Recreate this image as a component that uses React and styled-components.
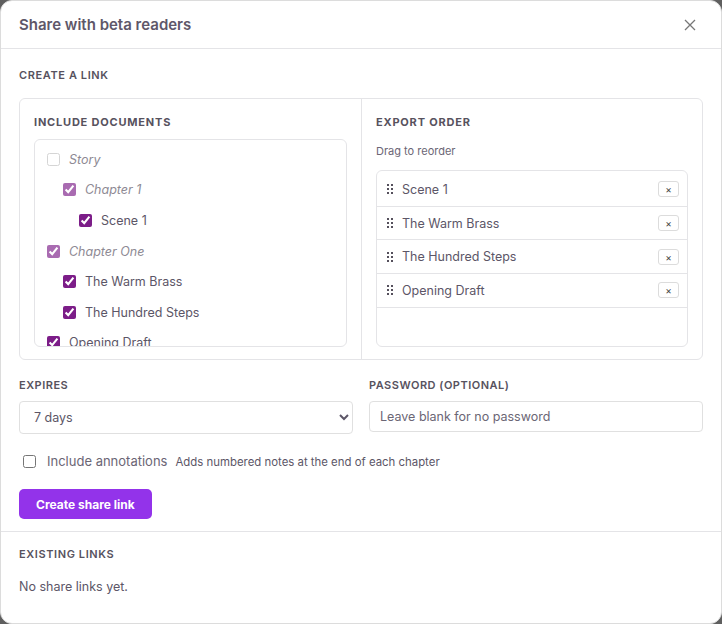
import styled, { createGlobalStyle } from "styled-components";

const Global = createGlobalStyle`
  html, body { margin: 0; padding: 0; background: #5f5f5f; }
  body { font-family: Inter, "Noto Sans", sans-serif; }
  * { box-sizing: border-box; }
`;

const Modal = styled.div`
  width: 722px;
  height: 624px;
  background: #fff;
  border: 1px solid #dcdcdc;
  border-radius: 12px;
  overflow: hidden;
  display: flex;
  flex-direction: column;
  color: #5c5667;
`;

const Header = styled.div`
  height: 48px;
  flex: none;
  padding: 0 24px 0 18px;
  display: flex;
  align-items: center;
  justify-content: space-between;
  border-bottom: 1px solid #e4e4e7;
`;

const Title = styled.h2`
  margin: 0;
  font-size: 15px;
  font-weight: 600;
  color: #5e5769;
`;

const CloseButton = styled.button`
  border: none;
  background: none;
  padding: 0;
  width: 14px;
  height: 14px;
  display: flex;
  align-items: center;
  justify-content: center;
`;

const Section = styled.div`
  padding: ${(p) => p.pad || "18px 18px 12px"};
  border-bottom: ${(p) => (p.divider ? "1px solid #e4e4e7" : "none")};
  display: flex;
  flex-direction: column;
`;

const SectionTitle = styled.div`
  font-size: 11px;
  font-weight: 600;
  letter-spacing: 0.6px;
  text-transform: uppercase;
  color: #57525e;
  margin-bottom: ${(p) => p.mb || "16px"};
`;

const Panel = styled.div`
  display: grid;
  grid-template-columns: 342px 1fr;
  border: 1px solid #e4e4e7;
  border-radius: 6px;
  height: 262px;
`;

const Column = styled.div`
  padding: 16px 14px 12px 14px;
  border-right: ${(p) => (p.divider ? "1px solid #e4e4e7" : "none")};
  display: flex;
  flex-direction: column;
`;

const ColTitle = styled.div`
  font-size: 11px;
  font-weight: 700;
  letter-spacing: 0.8px;
  color: #57525e;
  margin-bottom: ${(p) => p.mb || "10px"};
`;

const Hint = styled.div`
  font-size: 11px;
  color: #6b6675;
  margin-bottom: 12px;
`;

const Tree = styled.div`
  border: 1px solid #e4e4e7;
  border-radius: 6px;
  height: 208px;
  overflow: hidden;
  padding: 4px 12px;
`;

const TreeRow = styled.label`
  display: flex;
  align-items: center;
  gap: 9px;
  height: 30.6px;
  padding-left: ${(p) => p.level * 16}px;
  font-size: 12.5px;
  color: ${(p) => (p.folder ? "#8e8a94" : "#5c5667")};
  font-style: ${(p) => (p.folder ? "italic" : "normal")};
`;

const Check = styled.input.attrs({ type: "checkbox" })`
  margin: 0;
  width: 13px;
  height: 13px;
  accent-color: #7c1d88;
  opacity: ${(p) => (p.faded ? (p.defaultChecked ? 0.65 : 0.3) : 1)};
`;

const OrderList = styled.div`
  border: 1px solid #e4e4e7;
  border-radius: 6px;
  flex: 1;
  overflow: hidden;
  padding-top: 2px;
`;

const OrderRow = styled.div`
  display: flex;
  align-items: center;
  height: 33.7px;
  padding: 0 8px 0 10px;
  border-bottom: 1px solid #e4e4e7;
  font-size: 12.5px;
  color: #5c5667;
`;

const Grip = styled.svg`
  flex: none;
  margin-right: 9px;
`;

const OrderName = styled.span`
  flex: 1;
`;

const RemoveButton = styled.button`
  width: 21px;
  height: 16px;
  border: 1px solid #dcdcdc;
  border-radius: 3px;
  background: #fff;
  padding: 0;
  font-size: 10px;
  line-height: 1;
  color: #444;
  display: flex;
  align-items: center;
  justify-content: center;
  font-family: Inter, sans-serif;
`;

const FieldGrid = styled.div`
  display: grid;
  grid-template-columns: 1fr 1fr;
  gap: 16px;
  margin-top: 18px;
`;

const Field = styled.div`
  display: flex;
  flex-direction: column;
`;

const FieldLabel = styled.label`
  font-size: 11px;
  font-weight: 600;
  letter-spacing: 0.5px;
  color: #57525e;
  margin-bottom: 9px;
`;

const Select = styled.select`
  height: 33px;
  border: 1px solid #e0e0e0;
  border-radius: 4px;
  padding: 0 8px 0 10px;
  font-family: Inter, sans-serif;
  font-size: 12.5px;
  color: #5c5667;
  background: #fff;
`;

const TextInput = styled.input`
  height: 31px;
  border: 1px solid #e0e0e0;
  border-radius: 4px;
  padding: 0 10px;
  font-family: Inter, sans-serif;
  font-size: 12.5px;
  color: #5c5667;
  &::placeholder { color: #6b6675; }
`;

const OptionRow = styled.label`
  display: flex;
  align-items: baseline;
  gap: 8px;
  margin: 19px 0 0 4px;
`;

const PlainCheck = styled.input.attrs({ type: "checkbox" })`
  margin: 0 3px 0 0;
  width: 13px;
  height: 13px;
  align-self: center;
`;

const OptionText = styled.span`
  font-size: 13px;
  color: #6b6675;
`;

const OptionHint = styled.span`
  font-size: 11.4px;
  color: #5c5667;
`;

const PrimaryButton = styled.button`
  align-self: flex-start;
  margin-top: 20px;
  height: 30px;
  padding: 0 17px;
  border: none;
  border-radius: 5px;
  background: #9333ea;
  color: #fff;
  font-family: Inter, sans-serif;
  font-size: 12px;
  font-weight: 700;
`;

const Empty = styled.div`
  font-size: 12.5px;
  color: #5c5667;
`;

const tree = [
  { name: "Story", level: 0, folder: true, checked: false },
  { name: "Chapter 1", level: 1, folder: true, checked: true },
  { name: "Scene 1", level: 2, checked: true },
  { name: "Chapter One", level: 0, folder: true, checked: true },
  { name: "The Warm Brass", level: 1, checked: true },
  { name: "The Hundred Steps", level: 1, checked: true },
  { name: "Opening Draft", level: 0, checked: true },
];

const order = ["Scene 1", "The Warm Brass", "The Hundred Steps", "Opening Draft"];

const GripIcon = () => (
  <Grip width="6" height="10" viewBox="0 0 6 10">
    {[0, 4, 8].map((y) => (
      <g key={y} fill="#55505c">
        <rect x="0" y={y} width="2" height="2" />
        <rect x="4" y={y} width="2" height="2" />
      </g>
    ))}
  </Grip>
);

export default function App() {
  return (
    <>
      <Global />
      <Modal>
        <Header>
          <Title>Share with beta readers</Title>
          <CloseButton>
            <svg width="12" height="12" viewBox="0 0 12 12" stroke="#777" strokeWidth="1.3">
              <path d="M1 1L11 11M11 1L1 11" />
            </svg>
          </CloseButton>
        </Header>

        <Section divider pad="19px 18px 12px">
          <SectionTitle>Create a link</SectionTitle>
          <Panel>
            <Column divider>
              <ColTitle mb="10px">INCLUDE DOCUMENTS</ColTitle>
              <Tree>
                {tree.map((t) => (
                  <TreeRow key={t.name} level={t.level} folder={t.folder}>
                    <Check faded={t.folder} defaultChecked={t.checked} />
                    {t.name}
                  </TreeRow>
                ))}
              </Tree>
            </Column>
            <Column>
              <ColTitle mb="15px">EXPORT ORDER</ColTitle>
              <Hint>Drag to reorder</Hint>
              <OrderList>
                {order.map((o) => (
                  <OrderRow key={o}>
                    <GripIcon />
                    <OrderName>{o}</OrderName>
                    <RemoveButton>×</RemoveButton>
                  </OrderRow>
                ))}
              </OrderList>
            </Column>
          </Panel>

          <FieldGrid>
            <Field>
              <FieldLabel>EXPIRES</FieldLabel>
              <Select defaultValue="7">
                <option value="1">1 day</option>
                <option value="7">7 days</option>
                <option value="30">30 days</option>
              </Select>
            </Field>
            <Field>
              <FieldLabel>PASSWORD (OPTIONAL)</FieldLabel>
              <TextInput placeholder="Leave blank for no password" />
            </Field>
          </FieldGrid>

          <OptionRow>
            <PlainCheck />
            <OptionText>Include annotations</OptionText>
            <OptionHint>Adds numbered notes at the end of each chapter</OptionHint>
          </OptionRow>

          <PrimaryButton>Create share link</PrimaryButton>
        </Section>

        <Section pad="15px 18px">
          <SectionTitle mb="18px">Existing links</SectionTitle>
          <Empty>No share links yet.</Empty>
        </Section>
      </Modal>
    </>
  );
}
